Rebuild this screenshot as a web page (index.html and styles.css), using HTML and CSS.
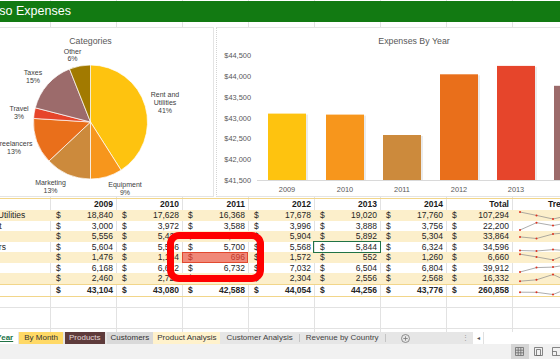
FILE: index.html
```html
<!DOCTYPE html>
<html lang="en">
<head>
    <meta charset="UTF-8">
    <title>Contoso Expenses</title>
    <link rel="stylesheet" href="styles.css">
</head>
<body>
    <div class="sheet">
        <div class="banner"><span class="banner-title">Contoso Expenses</span></div>
        <div class="spacer-row"></div>

        <div class="charts">
            <div class="chart pie-chart">
                <svg width="213" height="170" viewBox="0 0 213 170">
                    <text class="chart-title" x="90.5" y="16">Categories</text>
                    <g class="slices">
                        <path d="M90.5 94 L90.5 37 A57 57 0 0 1 121.04 142.13 Z" fill="#fec30f"/>
                        <path d="M90.5 94 L121.04 142.13 A57 57 0 0 1 90.5 151 Z" fill="#f7961c"/>
                        <path d="M90.5 94 L90.5 151 A57 57 0 0 1 48.95 133.02 Z" fill="#cc8a3c"/>
                        <path d="M90.5 94 L48.95 133.02 A57 57 0 0 1 33.61 90.42 Z" fill="#e96f1b"/>
                        <path d="M90.5 94 L33.61 90.42 A57 57 0 0 1 35.29 79.82 Z" fill="#e6452b"/>
                        <path d="M90.5 94 L35.29 79.82 A57 57 0 0 1 69.52 41 Z" fill="#9c6b6b"/>
                        <path d="M90.5 94 L69.52 41 A57 57 0 0 1 90.5 37 Z" fill="#a27a00"/>
                    </g>
                    <g class="pie-labels">
                        <text x="72.5" y="25.5">Other</text><text x="72.5" y="33">6%</text>
                        <text x="33" y="46.5">Taxes</text><text x="33" y="54.5">15%</text>
                        <text x="19" y="82.5">Travel</text><text x="19" y="90.5">3%</text>
                        <text x="14" y="117.5">Freelancers</text><text x="14" y="125.5">13%</text>
                        <text x="50.5" y="156.5">Marketing</text><text x="50.5" y="164.5">13%</text>
                        <text x="125" y="158.5">Equipment</text><text x="125" y="166.5">9%</text>
                        <text x="165" y="68.5">Rent and</text><text x="165" y="76.5">Utilities</text><text x="165" y="84.5">41%</text>
                    </g>
                </svg>
            </div>

            <div class="chart bar-chart">
                <svg width="344" height="170" viewBox="0 0 344 170">
                    <text class="chart-title" x="197" y="16">Expenses By Year</text>
                    <g class="axis-labels">
                        <text x="34" y="30.4">$44,500</text>
                        <text x="34" y="51.1">$44,000</text>
                        <text x="34" y="71.8">$43,500</text>
                        <text x="34" y="92.5">$43,000</text>
                        <text x="34" y="113.2">$42,500</text>
                        <text x="34" y="133.9">$42,000</text>
                        <text x="34" y="154.6">$41,500</text>
                    </g>
                    <g class="bar-shadows">
                        <rect x="53" y="86.6" width="38" height="65.4"/>
                        <rect x="111" y="87.6" width="38" height="64.4"/>
                        <rect x="168" y="108" width="38" height="44"/>
                        <rect x="225" y="47.3" width="38" height="104.7"/>
                        <rect x="282" y="38.9" width="38" height="113.1"/>
                        <rect x="339" y="58.8" width="38" height="93.2"/>
                    </g>
                    <rect x="51" y="85.6" width="38" height="66.4" fill="#fec30f"/>
                    <rect x="109" y="86.6" width="38" height="65.4" fill="#f7961c"/>
                    <rect x="166" y="107" width="38" height="45" fill="#cc8a3c"/>
                    <rect x="223" y="46.3" width="38" height="105.7" fill="#e96f1b"/>
                    <rect x="280" y="37.9" width="38" height="114.1" fill="#e6452b"/>
                    <rect x="337" y="57.8" width="38" height="94.2" fill="#9c6b6b"/>
                    <line class="axis" x1="40" y1="152.5" x2="344" y2="152.5"/>
                    <g class="year-labels">
                        <text x="70" y="163.6">2009</text>
                        <text x="128" y="163.6">2010</text>
                        <text x="185" y="163.6">2011</text>
                        <text x="242" y="163.6">2012</text>
                        <text x="299" y="163.6">2013</text>
                        <text x="356" y="163.6">2014</text>
                    </g>
                </svg>
            </div>
        </div>

        <table class="expenses">
            <colgroup>
                <col class="col-label"><col><col><col><col><col><col><col><col>
            </colgroup>
            <thead>
                <tr>
                    <th class="label"></th>
                    <th>2009</th><th>2010</th><th>2011</th><th>2012</th><th>2013</th><th>2014</th>
                    <th>Total</th><th class="trend-head">Trend</th>
                </tr>
            </thead>
            <tbody>
                <tr class="band">
                    <td class="label">Rent and Utilities</td>
                    <td><span class="cur">$</span>18,840</td><td><span class="cur">$</span>17,628</td><td><span class="cur">$</span>16,368</td>
                    <td><span class="cur">$</span>17,678</td><td><span class="cur">$</span>19,020</td><td><span class="cur">$</span>17,760</td>
                    <td><span class="cur">$</span>107,294</td>
                    <td class="trend"><svg class="spark" width="100" height="10.5"><polyline points="8,2 24.5,5.4 41,9 57.5,5.3 74,1.5 90.5,5.1"/><g><circle cx="8" cy="2" r="1"/><circle cx="24.5" cy="5.4" r="1"/><circle cx="41" cy="9" r="1"/><circle cx="57.5" cy="5.3" r="1"/></g></svg></td>
                </tr>
                <tr>
                    <td class="label">Equipment</td>
                    <td><span class="cur">$</span>3,000</td><td><span class="cur">$</span>3,972</td><td><span class="cur">$</span>3,588</td>
                    <td><span class="cur">$</span>3,996</td><td><span class="cur">$</span>3,888</td><td><span class="cur">$</span>3,756</td>
                    <td><span class="cur">$</span>22,200</td>
                    <td class="trend"><svg class="spark" width="100" height="10.5"><polyline points="8,9 24.5,1.7 41,4.6 57.5,1.5 74,2.3 90.5,3.3"/><g><circle cx="8" cy="9" r="1"/><circle cx="24.5" cy="1.7" r="1"/><circle cx="41" cy="4.6" r="1"/><circle cx="57.5" cy="1.5" r="1"/></g></svg></td>
                </tr>
                <tr class="band">
                    <td class="label">Marketing</td>
                    <td><span class="cur">$</span>5,556</td><td><span class="cur">$</span>5,424</td><td><span class="cur">$</span>5,784</td>
                    <td><span class="cur">$</span>5,904</td><td><span class="cur">$</span>5,892</td><td><span class="cur">$</span>5,304</td>
                    <td><span class="cur">$</span>33,864</td>
                    <td class="trend"><svg class="spark" width="100" height="10.5"><polyline points="8,5.9 24.5,7.5 41,3 57.5,1.5 74,1.7 90.5,9"/><g><circle cx="8" cy="5.9" r="1"/><circle cx="24.5" cy="7.5" r="1"/><circle cx="41" cy="3" r="1"/><circle cx="57.5" cy="1.5" r="1"/></g></svg></td>
                </tr>
                <tr>
                    <td class="label">Freelancers</td>
                    <td><span class="cur">$</span>5,604</td><td><span class="cur">$</span>5,556</td><td><span class="cur">$</span>5,700</td>
                    <td><span class="cur">$</span>5,568</td><td class="selected"><span class="cur">$</span>5,844</td><td><span class="cur">$</span>6,324</td>
                    <td><span class="cur">$</span>34,596</td>
                    <td class="trend"><svg class="spark" width="100" height="10.5"><polyline points="8,8.5 24.5,9 41,7.6 57.5,8.9 74,6.2 90.5,1.5"/><g><circle cx="8" cy="8.5" r="1"/><circle cx="24.5" cy="9" r="1"/><circle cx="41" cy="7.6" r="1"/><circle cx="57.5" cy="8.9" r="1"/></g></svg></td>
                </tr>
                <tr class="band">
                    <td class="label">Travel</td>
                    <td><span class="cur">$</span>1,476</td><td><span class="cur">$</span>1,104</td><td class="hot"><span class="cur">$</span>696</td>
                    <td><span class="cur">$</span>1,572</td><td><span class="cur">$</span>552</td><td><span class="cur">$</span>1,260</td>
                    <td><span class="cur">$</span>6,660</td>
                    <td class="trend"><svg class="spark" width="100" height="10.5"><polyline points="8,2.2 24.5,4.9 41,7.9 57.5,1.5 74,9 90.5,3.1"/><g><circle cx="8" cy="2.2" r="1"/><circle cx="24.5" cy="4.9" r="1"/><circle cx="41" cy="7.9" r="1"/><circle cx="57.5" cy="1.5" r="1"/></g></svg></td>
                </tr>
                <tr>
                    <td class="label">Taxes</td>
                    <td><span class="cur">$</span>6,168</td><td><span class="cur">$</span>6,672</td><td><span class="cur">$</span>6,732</td>
                    <td><span class="cur">$</span>7,032</td><td><span class="cur">$</span>6,504</td><td><span class="cur">$</span>6,804</td>
                    <td><span class="cur">$</span>39,912</td>
                    <td class="trend"><svg class="spark" width="100" height="10.5"><polyline points="8,9 24.5,4.6 41,4.1 57.5,1.5 74,6.1 90.5,3.5"/><g><circle cx="8" cy="9" r="1"/><circle cx="24.5" cy="4.6" r="1"/><circle cx="41" cy="4.1" r="1"/><circle cx="57.5" cy="1.5" r="1"/></g></svg></td>
                </tr>
                <tr class="band">
                    <td class="label">Other</td>
                    <td><span class="cur">$</span>2,460</td><td><span class="cur">$</span>2,724</td><td><span class="cur">$</span>3,720</td>
                    <td><span class="cur">$</span>2,304</td><td><span class="cur">$</span>2,556</td><td><span class="cur">$</span>2,568</td>
                    <td><span class="cur">$</span>16,332</td>
                    <td class="trend"><svg class="spark" width="100" height="10.5"><polyline points="8,8.2 24.5,6.8 41,1.5 57.5,9 74,7.7 90.5,7.6"/><g><circle cx="8" cy="8.2" r="1"/><circle cx="24.5" cy="6.8" r="1"/><circle cx="41" cy="1.5" r="1"/><circle cx="57.5" cy="9" r="1"/></g></svg></td>
                </tr>
                <tr class="total">
                    <td class="label">Total</td>
                    <td><span class="cur">$</span>43,104</td><td><span class="cur">$</span>43,080</td><td><span class="cur">$</span>42,588</td>
                    <td><span class="cur">$</span>44,054</td><td><span class="cur">$</span>44,256</td><td><span class="cur">$</span>43,776</td>
                    <td><span class="cur">$</span>260,858</td>
                    <td class="trend"><svg class="spark" width="100" height="11.5"><polyline points="8,7.2 24.5,7.3 41,9.5 57.5,2.9 74,2 90.5,4.2"/><g><circle cx="8" cy="7.2" r="1"/><circle cx="24.5" cy="7.3" r="1"/><circle cx="41" cy="9.5" r="1"/><circle cx="57.5" cy="2.9" r="1"/></g></svg></td>
                </tr>
            </tbody>
        </table>

        <div class="empty-row"></div>
        <div class="empty-row tall"></div>
    </div>

    <div class="tabs">
        <span class="tab active">By Year</span>
        <span class="tab month">By Month</span>
        <span class="tab products">Products</span>
        <span class="tab customers">Customers</span>
        <span class="tab analysis">Product Analysis</span>
        <span class="tab plain">Customer Analysis</span>
        <span class="tab plain">Revenue by Country</span>
        <span class="add-sheet">
            <svg width="9" height="9" viewBox="0 0 9 9"><circle cx="4.5" cy="4.5" r="4" fill="none" stroke="#777" stroke-width="0.8"/><path d="M4.5 2.3 V6.7 M2.3 4.5 H6.7" stroke="#777" stroke-width="0.8"/></svg>
        </span>
        <span class="tab-dots">&#8942;</span>
        <span class="hscroll"><span class="scroll-left">&#9666;</span></span>
    </div>

    <div class="status">
        <span class="view active">
            <svg width="9" height="9" viewBox="0 0 9 9"><path d="M0.5 0.5 H8.5 V8.5 H0.5 Z M3.2 0.5 V8.5 M5.8 0.5 V8.5 M0.5 3.2 H8.5 M0.5 5.8 H8.5" fill="none" stroke="#6a6a6a" stroke-width="0.8"/></svg>
        </span>
        <span class="view">
            <svg width="9" height="9" viewBox="0 0 9 9"><path d="M0.5 0.5 H8.5 V8.5 H0.5 Z M2.5 2.5 H6.5 V8.5 H2.5 Z" fill="none" stroke="#6a6a6a" stroke-width="0.8"/></svg>
        </span>
        <span class="view last">
            <svg width="9" height="9" viewBox="0 0 9 9"><path d="M0.5 0.5 H8.5 V8.5 H0.5 Z M0.5 4.5 H4.5 V8.5" fill="none" stroke="#6a6a6a" stroke-width="0.8"/></svg>
        </span>
    </div>

    <div class="callout"></div>
</body>
</html>
```

FILE: styles.css
```css
body {
    margin: 0;
    width: 560px;
    height: 359px;
    overflow: hidden;
    position: relative;
    background: #fff;
    color: #262626;
    font-family: "Liberation Sans", Arial, sans-serif;
}
.sheet {
    height: 332px;
    overflow: hidden;
    background-image: linear-gradient(to right, #e2e2e2 1px, transparent 1px);
    background-size: 66px 100%;
    background-position: 50px 0;
}
.banner {
    margin-top: 1px;
    height: 21px;
    background: #127a12;
    color: #fff;
    font-size: 12.5px;
    line-height: 21px;
    white-space: nowrap;
    overflow: hidden;
}
.banner-title { margin-left: -34px; }
.spacer-row { height: 5px; }

/* charts */
.charts {
    display: flex;
    gap: 2px;
    width: 640px;
    height: 170px;
    margin-left: -1px;
}
.chart {
    background: #fff;
    border: 1px solid #e4e4e4;
    overflow: hidden;
}
.chart svg { display: block; }
.pie-chart { width: 213px; }
.bar-chart { flex: 1; border-left: 1px dotted #d4d4d4; }
.chart-title {
    font-size: 8.8px;
    fill: #595959;
    text-anchor: middle;
}
.slices path { stroke: #fff; stroke-width: 0.7; }
.pie-labels text {
    font-size: 7px;
    fill: #404040;
    text-anchor: middle;
}
.axis-labels text {
    font-size: 7.4px;
    fill: #595959;
    text-anchor: end;
}
.year-labels text {
    font-size: 7.4px;
    fill: #595959;
    text-anchor: middle;
}
.bar-shadows rect { fill: #000; opacity: 0.08; }
.axis { stroke: #d9d9d9; stroke-width: 1; }

/* table */
.expenses {
    border-collapse: collapse;
    table-layout: fixed;
    width: 620px;
    margin: 1px 0 0 -42px;
    font-size: 8.5px;
}
.expenses col { width: 66px; }
.expenses col.col-label { width: 92px; }
.expenses th,
.expenses td {
    height: 10.5px;
    line-height: 10.5px;
    padding: 0 3px 0 6px;
    text-align: right;
    white-space: nowrap;
    overflow: hidden;
}
.expenses thead th {
    height: 11px;
    line-height: 11px;
    color: #1a1a1a;
    border-top: 1px solid #f2d68a;
}
.expenses .label { text-align: left; padding-left: 3px; }
.expenses .trend-head { text-align: left; padding-left: 36px; }
.cur { float: left; }
.band td { background: #fcefcb; }
.total td {
    height: 11.5px;
    line-height: 11.5px;
    font-weight: bold;
    border-top: 1px solid #f2d68a;
    border-bottom: 1px solid #f2d68a;
}
.expenses td.trend { padding: 0; }
.spark { display: block; overflow: visible; }
.spark polyline { fill: none; stroke: #8a8a8a; stroke-width: 0.7; }
.spark circle { fill: #e0301e; }
.expenses td.hot {
    background: #f08878;
    color: #c0392b;
    box-shadow: inset 0 0 0 1px #e2492f;
}
.expenses td.selected { outline: 1px solid #217346; }

.empty-row {
    height: 10px;
    border-bottom: 1px solid #e2e2e2;
}
.empty-row.tall { height: 20px; }

/* sheet tabs */
.tabs {
    display: flex;
    align-items: stretch;
    height: 12px;
    background: #e6e6e6;
    font-size: 8px;
    line-height: 12px;
    white-space: nowrap;
    color: #333;
}
.tab { padding: 0 5px; }
.tab.active {
    margin-left: -21px;
    background: #fff;
    color: #217346;
    font-weight: bold;
    text-decoration: underline;
}
.tab.month { background: #ffd966; margin-left: 1px; }
.tab.products { background: #5e3b3b; color: #e3d8d8; margin-left: 2px; padding: 0 4px; }
.tab.customers { background: #d9d9d9; margin-left: 2px; padding: 0 4px; }
.tab.analysis { background: #fff2cc; padding: 0 4px; }
.tab.plain {
    padding: 0 6px;
    margin: 2px 0;
    line-height: 8px;
    border-right: 1px solid #c4c4c4;
    color: #444;
}
.add-sheet {
    display: flex;
    align-items: center;
    margin-left: 15px;
}
.tab-dots {
    margin-left: 52px;
    color: #999;
    font-size: 7px;
}
.hscroll {
    margin-left: auto;
    width: 87px;
    background: #fff;
    display: flex;
}
.scroll-left {
    width: 10px;
    border-right: 1px solid #e0e0e0;
    text-align: center;
    font-size: 6px;
    color: #555;
}

/* status bar */
.status {
    display: flex;
    justify-content: flex-end;
    height: 15px;
    background: #f1f1f1;
}
.view {
    width: 18.5px;
    display: flex;
    align-items: center;
    justify-content: center;
}
.view.active { background: #d5d5d5; }
.view.last { margin-right: -6px; }

/* red callout drawn over the 2011 column */
.callout {
    position: absolute;
    left: 167px;
    top: 232px;
    width: 97px;
    height: 50px;
    box-sizing: border-box;
    border: 7px solid #f00;
    border-radius: 12px;
}
```
